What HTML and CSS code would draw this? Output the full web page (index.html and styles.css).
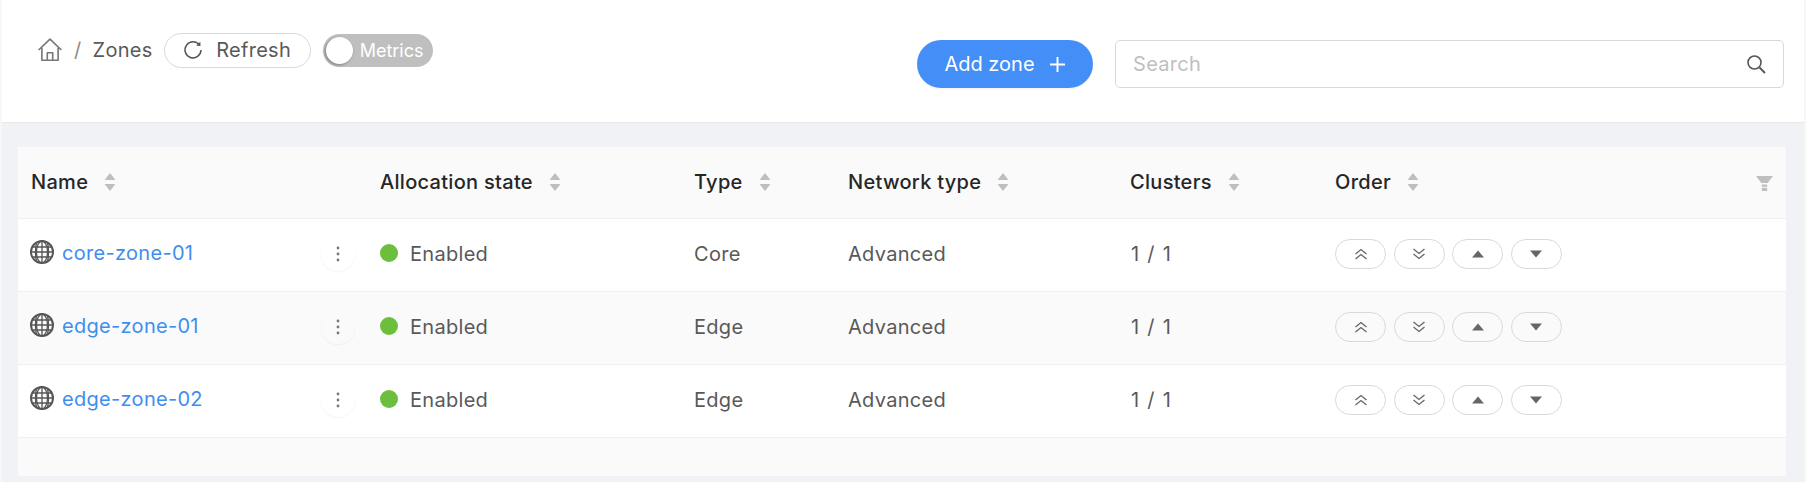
FILE: index.html
```html
<!DOCTYPE html>
<html lang="en">
<head>
<meta charset="utf-8">
<title>Zones</title>
<link rel="stylesheet" href="styles.css">
</head>
<body>
<svg class="defs" width="0" height="0" aria-hidden="true">
  <defs>
    <symbol id="globe" viewBox="0 0 24 24">
      <circle cx="12" cy="12" r="11" fill="none" stroke="currentColor" stroke-width="2"/>
      <ellipse cx="12" cy="12" rx="5.500" ry="11" fill="none" stroke="currentColor" stroke-width="1.300"/>
      <path d="M12 1v22M1 12h22M2.600 7h18.800M2.600 17h18.800M6.500 2.500q-2 9.500 0 19M17.500 2.500q2 9.500 0 19" fill="none" stroke="currentColor" stroke-width="1.300"/>
    </symbol>
    <symbol id="sort" viewBox="0 0 12 18">
      <path d="M6 0l5.500 7H.5zM6 18l5.500-7H.5z" fill="currentColor"/>
    </symbol>
    <symbol id="dots" viewBox="0 0 4 16">
      <circle cx="2" cy="2" r="1.400" fill="currentColor"/>
      <circle cx="2" cy="8" r="1.400" fill="currentColor"/>
      <circle cx="2" cy="14" r="1.400" fill="currentColor"/>
    </symbol>
    <symbol id="dup" viewBox="0 0 14 12">
      <path d="M1.500 6L7 1.500 12.500 6M1.500 11L7 6.500l5.500 4.500" fill="none" stroke="currentColor" stroke-width="1.300"/>
    </symbol>
    <symbol id="ddown" viewBox="0 0 14 12">
      <path d="M1.500 1L7 5.500 12.500 1M1.500 6L7 10.500 12.500 6" fill="none" stroke="currentColor" stroke-width="1.300"/>
    </symbol>
    <symbol id="up" viewBox="0 0 14 8">
      <path d="M7 .5L13 7.500H1z" fill="currentColor"/>
    </symbol>
    <symbol id="down" viewBox="0 0 14 8">
      <path d="M7 7.500L13 .5H1z" fill="currentColor"/>
    </symbol>
  </defs>
</svg>
<div class="page">
  <header class="topbar">
    <div class="crumbs">
      <svg class="home" viewBox="0 0 24 24" aria-hidden="true"><path d="M1.500 12L12 2l10.500 10M4.500 10v11.500h15V10M9.500 21.500v-7h5v7" fill="none" stroke="currentColor" stroke-width="1.500" stroke-linejoin="round"/></svg>
      <span class="sep">/</span>
      <span class="crumb">Zones</span>
      <button class="refresh" type="button">
        <svg class="refresh-icon" viewBox="0 0 20 20" aria-hidden="true"><path d="M16.500 5.200A8 8 0 1 0 18 10" fill="none" stroke="currentColor" stroke-width="1.500"/><path d="M13.200 5.800l4.300.3-.2-4.300z" fill="currentColor"/></svg>
        <span>Refresh</span>
      </button>
      <div class="toggle"><span class="knob"></span><span class="toggle-label">Metrics</span></div>
    </div>
    <div class="actions">
      <button class="add" type="button">Add zone
        <svg class="plus" viewBox="0 0 16 16" aria-hidden="true"><path d="M8 1v14M1 8h14" stroke="currentColor" stroke-width="1.800" fill="none"/></svg>
      </button>
      <div class="search">
        <span class="placeholder">Search</span>
        <svg class="search-icon" viewBox="0 0 20 20" aria-hidden="true"><circle cx="8.500" cy="8.500" r="6.500" fill="none" stroke="currentColor" stroke-width="1.600"/><path d="M13.500 13.500l5.500 5.500" stroke="currentColor" stroke-width="1.800" fill="none"/></svg>
      </div>
    </div>
  </header>
  <main class="content">
    <table class="zones">
      <colgroup>
        <col class="c1"><col class="c2"><col class="c3"><col class="c4"><col class="c5"><col class="c6"><col>
      </colgroup>
      <thead>
        <tr>
          <th><span class="th">Name<svg class="sort"><use href="#sort"/></svg></span></th>
          <th><span class="th">Allocation state<svg class="sort"><use href="#sort"/></svg></span></th>
          <th><span class="th">Type<svg class="sort"><use href="#sort"/></svg></span></th>
          <th><span class="th">Network type<svg class="sort"><use href="#sort"/></svg></span></th>
          <th><span class="th">Clusters<svg class="sort"><use href="#sort"/></svg></span></th>
          <th><span class="th">Order<svg class="sort"><use href="#sort"/></svg></span></th>
          <th class="filter-cell"><svg class="filter" viewBox="0 0 16 14" aria-hidden="true"><path d="M0 0h16l-5 6.500H5zM5.500 8h5v2h-5zM5.500 11h5v3h-5z" fill="currentColor"/></svg></th>
        </tr>
      </thead>
      <tbody>
        <tr>
          <td><div class="name-cell"><span class="name"><svg class="globe"><use href="#globe"/></svg><a href="#">core-zone-01</a></span><span class="more"><svg class="dots"><use href="#dots"/></svg></span></div></td>
          <td><span class="status"><i class="dot"></i>Enabled</span></td>
          <td>Core</td><td>Advanced</td><td class="count">1 / 1</td>
          <td><div class="order"><span class="ob"><svg class="dbl"><use href="#dup"/></svg></span><span class="ob"><svg class="dbl"><use href="#ddown"/></svg></span><span class="ob"><svg class="tri"><use href="#up"/></svg></span><span class="ob"><svg class="tri"><use href="#down"/></svg></span></div></td>
          <td></td>
        </tr>
        <tr>
          <td><div class="name-cell"><span class="name"><svg class="globe"><use href="#globe"/></svg><a href="#">edge-zone-01</a></span><span class="more"><svg class="dots"><use href="#dots"/></svg></span></div></td>
          <td><span class="status"><i class="dot"></i>Enabled</span></td>
          <td>Edge</td><td>Advanced</td><td class="count">1 / 1</td>
          <td><div class="order"><span class="ob"><svg class="dbl"><use href="#dup"/></svg></span><span class="ob"><svg class="dbl"><use href="#ddown"/></svg></span><span class="ob"><svg class="tri"><use href="#up"/></svg></span><span class="ob"><svg class="tri"><use href="#down"/></svg></span></div></td>
          <td></td>
        </tr>
        <tr>
          <td><div class="name-cell"><span class="name"><svg class="globe"><use href="#globe"/></svg><a href="#">edge-zone-02</a></span><span class="more"><svg class="dots"><use href="#dots"/></svg></span></div></td>
          <td><span class="status"><i class="dot"></i>Enabled</span></td>
          <td>Edge</td><td>Advanced</td><td class="count">1 / 1</td>
          <td><div class="order"><span class="ob"><svg class="dbl"><use href="#dup"/></svg></span><span class="ob"><svg class="dbl"><use href="#ddown"/></svg></span><span class="ob"><svg class="tri"><use href="#up"/></svg></span><span class="ob"><svg class="tri"><use href="#down"/></svg></span></div></td>
          <td></td>
        </tr>
      </tbody>
    </table>
    <div class="table-foot"></div>
  </main>
</div>
</body>
</html>
```
FILE: styles.css
```css
* { box-sizing: border-box; }
html, body { margin: 0; height: 100%; }
body {
  background: #f7f7f8;
  font-family: Inter, "Noto Sans", sans-serif;
  font-size: 20px;
  letter-spacing: .3px;
  color: #595959;
  overflow: hidden;
}
.defs { display: block; height: 0; }
.page {
  margin: 0 2px;
  height: 482px;
  background: #f0f2f5;
  display: flex;
  flex-direction: column;
}
.topbar {
  height: 123px;
  background: #fff;
  border-bottom: 1px solid #e8e8e8;
  display: flex;
  justify-content: space-between;
  padding: 33px 20px 0 35px;
}
.crumbs { display: flex; align-items: center; height: 34px; }
.home { width: 26px; height: 26px; color: #777; }
.sep { margin: 0 11px 0 11px; color: #8c8c8c; }
.crumb { color: #595959; margin-right: 11px; }
.refresh {
  width: 147px;
  height: 35px;
  border: 1px solid #d9d9d9;
  border-radius: 18px;
  background: #fff;
  color: #595959;
  font: inherit;
  letter-spacing: inherit;
  display: flex;
  align-items: center;
  justify-content: center;
  gap: 13px;
  padding: 0;
  margin-right: 12px;
}
.refresh-icon { width: 20px; height: 20px; color: #555; }
.toggle {
  width: 110px;
  height: 33px;
  border-radius: 17px;
  background: #bfbfbf;
  display: flex;
  align-items: center;
  padding-left: 3px;
}
.knob {
  width: 27px;
  height: 27px;
  border-radius: 50%;
  background: #fff;
  box-shadow: -1px 1px 3px rgba(0, 0, 0, .35);
}
.toggle-label { color: #fff; font-size: 18px; letter-spacing: 0; margin-left: 7px; }
.actions { display: flex; gap: 22px; padding-top: 7px; }
.add {
  width: 176px;
  height: 48px;
  border: 0;
  border-radius: 24px;
  background: #448ef7;
  color: #fff;
  font: inherit;
  letter-spacing: 0;
  display: flex;
  align-items: center;
  justify-content: center;
  gap: 14px;
  padding: 0;
  box-shadow: 0 2px 0 rgba(0, 0, 0, .03);
}
.plus { width: 17px; height: 17px; }
.search {
  width: 669px;
  height: 48px;
  border: 1px solid #d9d9d9;
  border-radius: 5px;
  display: flex;
  align-items: center;
  justify-content: space-between;
  padding: 0 17px 0 17px;
  background: #fff;
}
.placeholder { color: #bfbfbf; }
.search-icon { width: 20px; height: 20px; color: #555; }
.content { padding: 24px 18px 6px 16px; flex: 1; display: flex; flex-direction: column; }
.zones {
  width: 100%;
  table-layout: fixed;
  border-collapse: collapse;
  background: #fff;
}
.c1 { width: 349px; }
.c2 { width: 314px; }
.c3 { width: 154px; }
.c4 { width: 282px; }
.c5 { width: 205px; }
.c6 { width: 400px; }
thead tr { height: 71px; }
tbody tr { height: 73px; }
th {
  background: #fafafa;
  border-bottom: 1px solid #f0f0f0;
  color: #262626;
  font-weight: 500;
  text-align: left;
  padding: 0 0 0 13px;
}
.th { display: inline-flex; align-items: center; gap: 16px; }
.sort { width: 12px; height: 18px; color: #bfbfbf; }
.filter-cell { text-align: right; padding: 0 13px 0 0; }
.filter { width: 17px; height: 15px; color: #bfbfbf; display: inline-block; vertical-align: middle; }
td {
  border-bottom: 1px solid #f0f0f0;
  padding: 0 0 2px 13px;
  vertical-align: middle;
}
.count { word-spacing: 2px; padding-left: 14px; }
tbody tr:nth-child(2) { background: #fafafa; }
.name-cell { display: flex; align-items: center; justify-content: space-between; padding-right: 12px; }
.name { display: flex; align-items: center; gap: 8px; margin-top: -2px; margin-left: -1px; }
.globe { width: 24px; height: 24px; color: #555; margin-top: -2px; }
.name a { color: #3e8ef0; text-decoration: none; }
.more {
  width: 34px;
  height: 34px;
  border-radius: 50%;
  display: flex;
  align-items: center;
  justify-content: center;
  box-shadow: 0 1px 2px rgba(0, 0, 0, .05);
}
.dots { width: 4px; height: 16px; color: #777; }
.status { display: inline-flex; align-items: center; margin-top: 2px; }
.dot { width: 18px; height: 18px; border-radius: 50%; background: #6cbf3c; margin-right: 12px; margin-top: -2px; }
.order { display: flex; gap: 7.500px; }
.ob {
  width: 51px;
  height: 30px;
  border: 1px solid #d9d9d9;
  border-radius: 15px;
  display: flex;
  align-items: center;
  justify-content: center;
  color: #666;
}
.dbl { width: 14px; height: 12px; }
.tri { width: 14px; height: 8px; }
.table-foot { flex: 1; background: #fafafa; }
```
